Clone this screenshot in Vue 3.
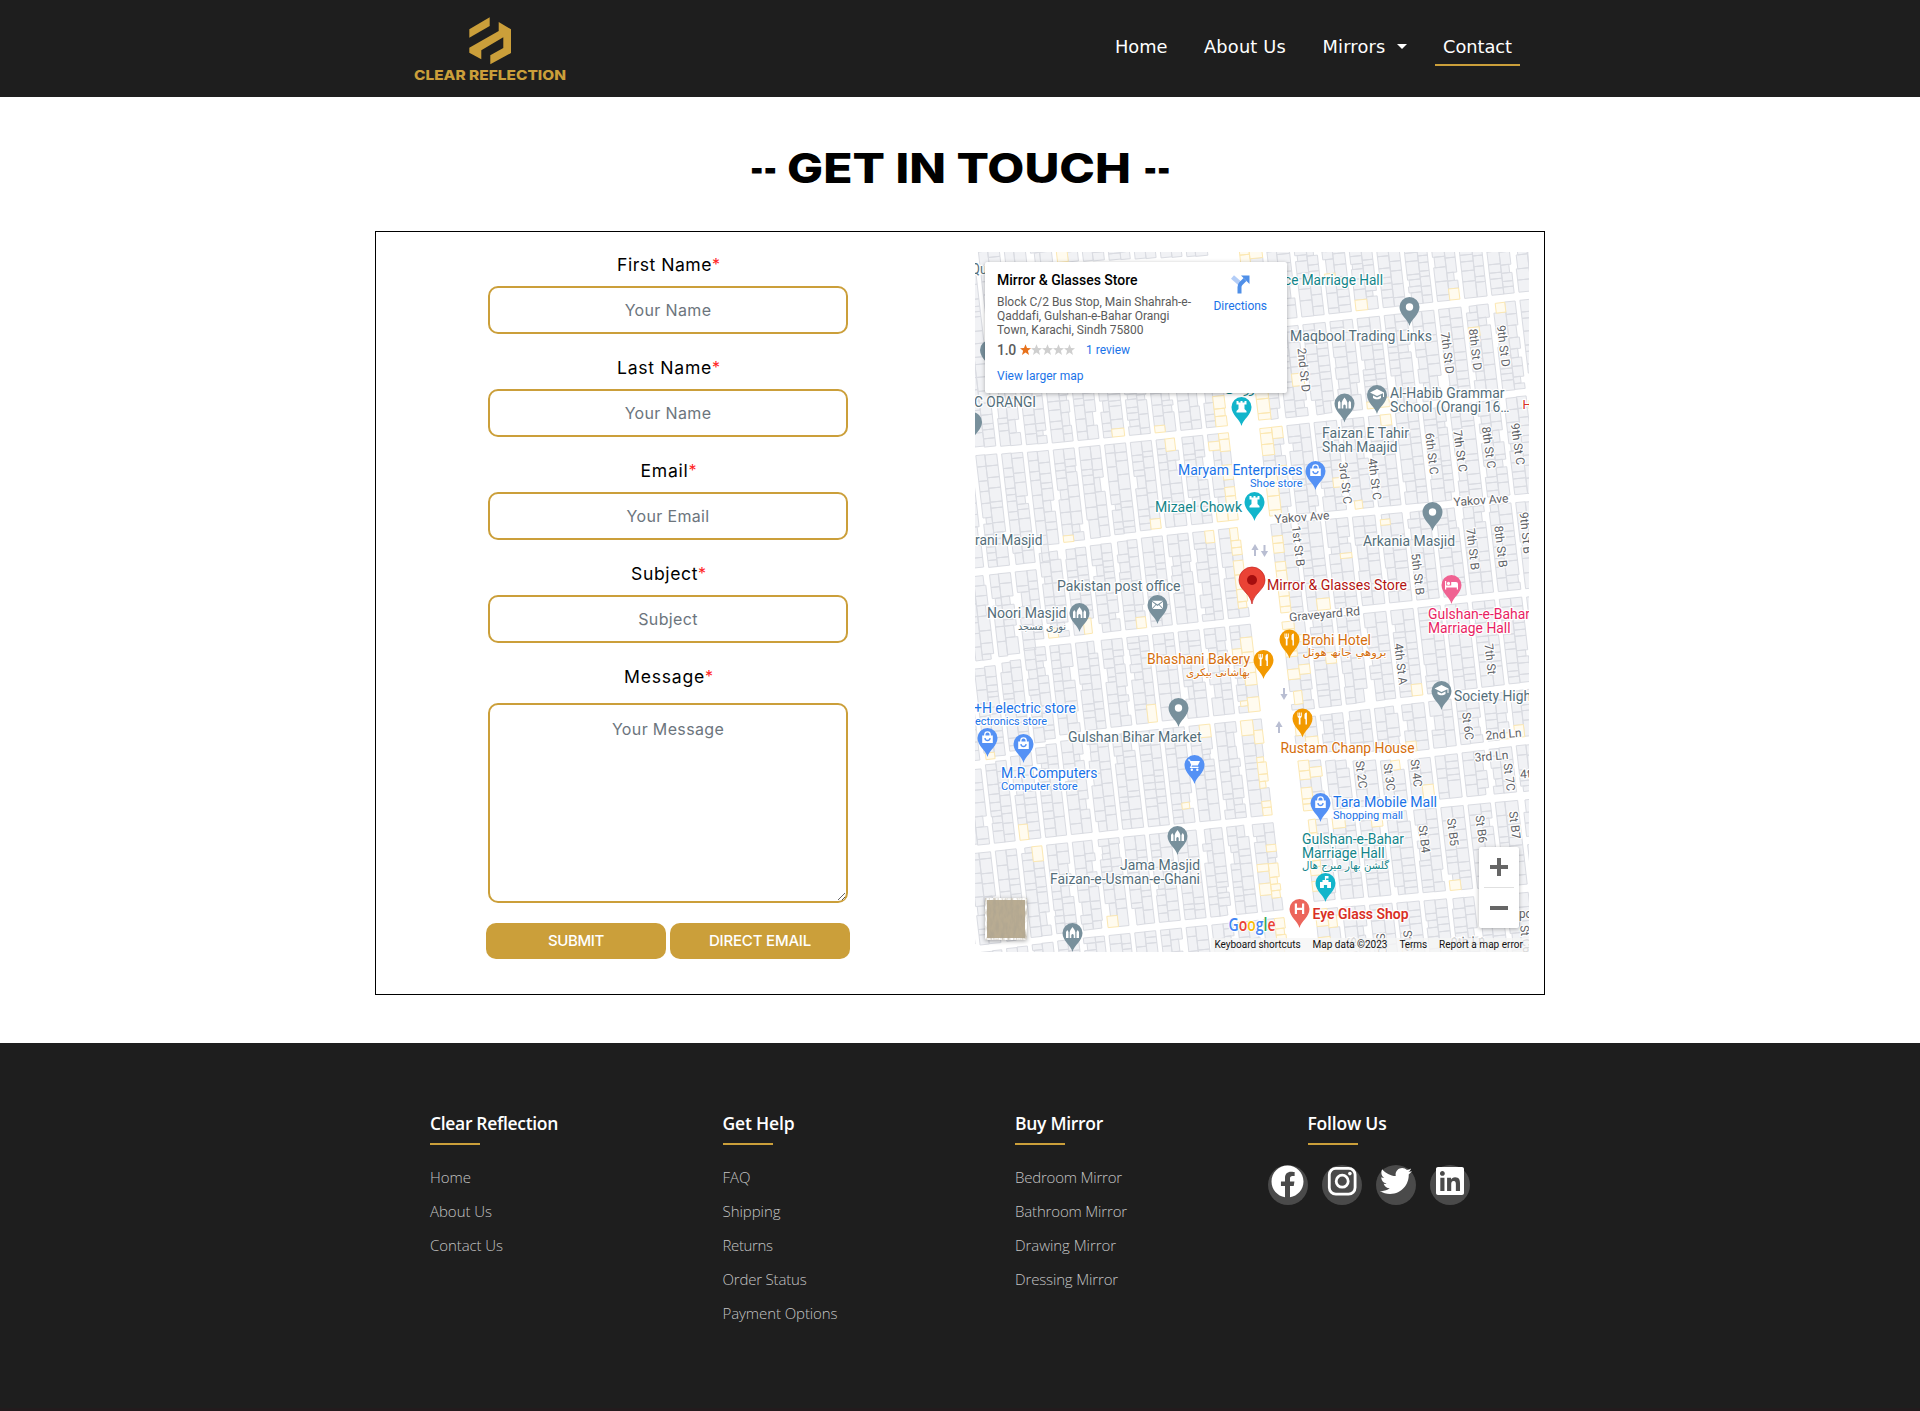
<script setup>
// Stretches or tightens tracking so that a label takes a given width.
const vFit = {
  mounted(el, { value }) {
    const natural = el.getBoundingClientRect().width
    el.style.letterSpacing = (value - natural) / el.textContent.length + 'px'
  },
}

const nav = [
  { text: 'Home', w: 52.5 },
  { text: 'About Us', w: 82 },
  { text: 'Mirrors', w: 63, caret: true },
  { text: 'Contact', w: 69, active: true },
]

const fields = [
  { label: 'First Name', w: 95, hint: 'Your Name' },
  { label: 'Last Name', w: 95, hint: 'Your Name' },
  { label: 'Email', w: 48, hint: 'Your Email' },
  { label: 'Subject', w: 67, hint: 'Subject' },
]

const columns = [
  { title: 'Clear Reflection', w: 128, links: [['Home', 41], ['About Us', 62], ['Contact Us', 73]] },
  { title: 'Get Help', w: 72, links: [['FAQ', 28], ['Shipping', 58], ['Returns', 50], ['Order Status', 84], ['Payment Options', 115]] },
  { title: 'Buy Mirror', w: 88, links: [['Bedroom Mirror', 107], ['Bathroom Mirror', 112], ['Drawing Mirror', 101], ['Dressing Mirror', 103]] },
]

// ---- street grid ----
let seed = 7
const rnd = () => {
  seed = (seed * 16807) % 2147483647
  return seed / 2147483647
}
const along = (pts, x) => {
  if (x <= pts[0][0]) return pts[0][1]
  for (let i = 1; i < pts.length; i++) {
    const [x0, y0] = pts[i - 1]
    const [x1, y1] = pts[i]
    if (x <= x1) return y0 + ((y1 - y0) * (x - x0)) / (x1 - x0)
  }
  return pts[pts.length - 1][1]
}
const leftRoads = [
  [[0, -30], [300, -30]],
  [[0, 18], [300, 5]],
  [[0, 199], [62, 195], [175, 184], [255, 176]],
  [[0, 320], [62, 313], [65, 297], [172, 281], [272, 270]],
  [[0, 413], [48, 402], [52, 392], [272, 368]],
  [[0, 513], [85, 485], [182, 473], [290, 462]],
  [[0, 597], [95, 586], [195, 576], [300, 566]],
  [[0, 697], [95, 683], [310, 661]],
  [[0, 740], [310, 730]],
]
const rightRoads = [
  [[280, -30], [560, -30]],
  [[280, 73], [312, 70], [552, 43]],
  [[285, 172], [395, 160], [552, 139]],
  [[295, 268], [552, 245]],
  [[312, 365], [552, 340]],
  [[320, 462], [552, 433]],
  [[430, 504], [552, 488]],
  [[340, 563], [552, 543]],
  [[302, 656], [552, 636]],
  [[302, 730], [552, 720]],
]
const slope = 0.115
let grey = ''
let yellow = ''
const f = (n) => n.toFixed(1)
function fill(roads, edge, dir, pitch, count) {
  for (let k = 0; k < count; k++) {
    for (let r = 0; r < roads.length - 1; r++) {
      const off = dir * k * pitch
      const inner = pitch - 5
      const split = inner * (0.42 + rnd() * 0.16)
      for (let half = 0; half < 2; half++) {
        const a = half ? split : 0
        const b = half ? inner : split
        const base = dir > 0 ? edge + off : edge + off - inner
        const at = (o, y) => base + o + slope * (y - 170)
        const mid = at((a + b) / 2, along(roads[r], base + 20))
        let y = along(roads[r], mid) + 4.5
        const end = along(roads[r + 1], mid) - 4.5
        while (y < end - 3) {
          let h = 5 + rnd() * 10
          if (end - y - h < 5) h = end - y
          const cut = rnd() < 0.14 ? 1 + rnd() * 3 : 0
          const l = half ? 0 : cut
          const g = half ? cut : 0
          const tl = at(a + l, y)
          const tr = at(b - g, y)
          const bl = at(a + l, y + h)
          const br = at(b - g, y + h)
          const sk = (b - a) * 0.05
          const p = `M${f(tl)} ${f(y + sk)}L${f(tr)} ${f(y - sk)}L${f(br)} ${f(y + h - sk)}L${f(bl)} ${f(y + h + sk)}z`
          const nearMain = k === 0
          const nearRoad = y < along(roads[r], mid) + 9 || y + h > end - 2
          const outer = dir > 0 ? !half : half
          const chance = nearMain ? (outer ? 0.75 : 0.12) : nearRoad ? 0.07 : 0.004
          if (rnd() < chance) yellow += p
          else grey += p
          y += h
        }
      }
    }
  }
}
fill(leftRoads, 252, -1, 26, 14)
fill(rightRoads, 284, 1, 27.5, 13)

// ---- places: [text, x, baseline, width, colour, size] ----
const SLATE = '#546e7a'
const BLUE = '#1a73e8'
const TEAL = '#12858a'
const ORANGE = '#d56e0c'
const labels = [
  ['Qu', -4, 22, 16, SLATE, 14],
  ['ce Marriage Hall', 309, 33, 99, TEAL, 14],
  ['Maqbool Trading Links', 315, 89, 142, SLATE, 14],
  ['Al-Habib Grammar', 415, 146, 114.5, SLATE, 14],
  ['School (Orangi 16…', 415, 160, 119.5, SLATE, 14],
  ['Faizan E Tahir', 347, 186, 87, SLATE, 14],
  ['Shah Maajid', 347, 200, 75.5, SLATE, 14],
  ['H', 547.5, 157, 9, '#d93025', 12],
  ['C ORANGI', -1, 155, 62, SLATE, 14],
  ['Maryam Enterprises', 203, 223, 124.5, BLUE, 14],
  ['Shoe store', 275, 235, 52.5, BLUE, 11],
  ['Mizael Chowk', 180, 260, 87, TEAL, 14],
  ['rani Masjid', 0, 293, 67.5, SLATE, 14],
  ['Pakistan post office', 82, 339, 123.5, SLATE, 14],
  ['Noori Masjid', 12, 366, 79.5, SLATE, 14],
  ['Arkania Masjid', 388, 294, 92, SLATE, 14],
  ['Gulshan-e-Bahar', 453, 367, 102, '#e91e63', 14],
  ['Marriage Hall', 453, 381, 82.5, '#e91e63', 14],
  ['Mirror & Glasses Store', 292, 338, 140, '#b31412', 14],
  ['Brohi Hotel', 327, 393, 69, ORANGE, 14],
  ['Bhashani Bakery', 172, 412, 103, ORANGE, 14],
  ['Society High', 479, 449, 77, SLATE, 14],
  ['+H electric store', -1, 461, 102, BLUE, 14],
  ['ectronics store', 0, 473, 72, BLUE, 11],
  ['Gulshan Bihar Market', 93, 490, 133.5, SLATE, 14],
  ['M.R Computers', 26, 526, 96.5, BLUE, 14],
  ['Computer store', 26, 538, 76.5, BLUE, 11],
  ['Rustam Chanp House', 305.5, 501, 134, ORANGE, 14],
  ['Tara Mobile Mall', 358, 555, 104, BLUE, 14],
  ['Shopping mall', 358, 567, 70, BLUE, 11],
  ['Gulshan-e-Bahar', 327, 592, 102, TEAL, 14],
  ['Marriage Hall', 327, 606, 82.5, TEAL, 14],
  ['Jama Masjid', 145, 618, 80, SLATE, 14],
  ['Faizan-e-Usman-e-Ghani', 75, 632, 150, SLATE, 14],
]
const urdu = [
  ['اورنگی', 283, 141, 33, TEAL],
  ['نوری مسجد', 91, 378, 48, SLATE],
  ['بروهي جانھ هوٽل', 411.5, 404, 84, ORANGE],
  ['بهاشانی بیکری', 275, 424, 64, ORANGE],
  ['گلشن بهار میرج هال', 414, 617, 87, TEAL],
]
// [text, centre x, centre y, length, angle]
const streets = [
  ['2nd St D', 329, 118, 44, 84], ['7th St D', 472.7, 101, 42, 83], ['8th St D', 500.5, 97.5, 42, 83], ['9th St D', 528.7, 94, 42, 83],
  ['3rd St C', 370.5, 231, 42, 83], ['4th St C', 400, 227, 42, 83], ['6th St C', 457, 201.5, 42, 83], ['7th St C', 485.5, 199, 42, 82],
  ['8th St C', 514, 195.5, 42, 82], ['9th St C', 543, 192, 42, 82],
  ['Yakov Ave', 327, 265, 55, -4], ['Yakov Ave', 506, 248, 55, -4], ['Graveyard Rd', 349.5, 362, 71, -5],
  ['1st St B', 323.5, 294, 41, 83], ['5th St B', 443, 322, 42, 83], ['7th St B', 498, 297, 42, 83], ['8th St B', 526, 294.5, 42, 83],
  ['9th St B', 551, 281, 42, 84], ['4th St A', 426, 412, 42, 83], ['7th St', 515.5, 407, 31, 84],
  ['St 6C', 493, 474, 28, 83], ['2nd Ln', 528.5, 482, 36, -5], ['3rd Ln', 516.5, 504, 34, -5], ['4th Ln', 562, 521, 34, -4],
  ['St 2C', 386.5, 522.5, 28, 83], ['St 3C', 414.5, 525, 28, 83], ['St 4C', 441.5, 521, 28, 83], ['St 7C', 534.5, 525, 28, 83],
  ['St B4', 449.5, 587, 28, 83], ['St B5', 478, 580, 28, 83], ['St B6', 506.5, 577, 28, 83], ['St B7', 540, 573, 28, 83],
  ['St B3', 378, 699, 28, 83], ['St C4', 407, 695, 28, 83], ['St C5', 434, 692, 28, 83], ['St C6', 551, 687, 28, 83],
  ['9th Ln', 493, 689, 34, -4], ['poor', 556, 662, 24, 0],
]
const GREYPIN = '#78909c'
const BLUEPIN = '#5491f5'
const AMBER = '#f29900'
const CYAN = '#12b5cb'
// [x, tip y, colour, glyph]
const pins = [
  [434.5, 74, GREYPIN, 'dot'], [402, 162, GREYPIN, 'cap'], [369.5, 170.5, GREYPIN, 'mosque'], [15, 117, GREYPIN, 'dot'], [-3, 189, GREYPIN, 'none'],
  [266.5, 174, CYAN, 'rook'], [340.5, 238, BLUEPIN, 'bag'], [279.5, 269, CYAN, 'rook'], [457.5, 279, GREYPIN, 'dot'],
  [182.5, 372, GREYPIN, 'mail'], [104.5, 380, GREYPIN, 'mosque'], [476.5, 352, '#f06292', 'bed'], [314.5, 406.5, AMBER, 'fork'],
  [288.5, 427, AMBER, 'fork'], [466.5, 458, GREYPIN, 'cap'], [203.5, 475, GREYPIN, 'dot'], [12.5, 505, BLUEPIN, 'bag'], [48.5, 511, BLUEPIN, 'bag'],
  [219.5, 532, BLUEPIN, 'cart'], [327.5, 485.5, AMBER, 'fork'], [345.5, 570, BLUEPIN, 'bag'], [202.5, 603, GREYPIN, 'mosque'],
  [350.5, 650, CYAN, 'hall'], [324.5, 676, '#ec665c', 'h'], [97.5, 700, GREYPIN, 'mosque'],
]
const glyphs = {
  cap: 'M-7-21.5L0-25L7-21.5V-17H6V-20.8L0-18zM-4-18.4L0-16.4L4-18.4V-16C2-14.2-2-14.2-4-16z',
  mosque: 'M-6.5-14V-20L-5.2-22L-4-20V-14zM-2.8-14V-20Q-2.5-22 0-25Q2.5-22 2.8-20V-14H1.2V-17Q0-19-1.2-17V-14zM4-14V-20L5.2-22L6.5-20V-14z',
  rook: 'M-5-25H-3V-23.5H-1V-25H1V-23.5H3V-25H5V-21.5H3V-17L5-15V-13.5H-5V-15L-3-17V-21.500H-5z',
  hall: 'M-.6-26H3V-23.5H.6V-22H3V-20H5.5V-14H1.6V-17H-1.6V-14H-5.5V-20H-3V-22H-.6z',
  mail: 'M-5.5-23.3H5.5L0-19.6zM-5.5-22.3L-2-19.5L-5.5-15.8zM5.5-22.3L2-19.5L5.5-15.8zM-5-15L-1.4-19L0-18L1.4-19L5-15z',
  bed: 'M-6.5-23H-5.3V-18.5H-.3V-22H4.5Q6.5-22 6.5-20V-14.5H5.3V-16.5H-5.3V-14.5H-6.5zM-4.6-20.6a1.6 1.6 0 1 0 3.2 0a1.6 1.6 0 1 0-3.2 0',
  fork: 'M-5-25H-4V-21.5H-3.3V-25H-2.4V-21.5H-1.7V-25H-.7V-21.5Q-.7-20-2-19.5V-13H-3.7V-19.5Q-5-20-5-21.5zM2-19V-23Q2.3-25 4.4-25V-13H3V-18z',
  cart: 'M-6.5-24.5H-4.5L-4-23H5.5L3.3-18.5H-2.4L-3-17.2H4V-16H-4.8L-3.3-19L-5.3-23.4H-6.5zM-3.9-14.2a1.2 1.2 0 1 0 2.4 0a1.2 1.2 0 1 0-2.4 0M1.6-14.2a1.2 1.2 0 1 0 2.4 0a1.2 1.2 0 1 0-2.4 0',
}
const arrows = [[280, 298, 180], [289.5, 299, 0], [309, 442, 0], [304, 475, 180]]
const google = [['G', '#4285f4'], ['o', '#ea4335'], ['o', '#fbbc05'], ['g', '#4285f4'], ['l', '#34a853'], ['e', '#ea4335']]
</script>

<template>
  <div class="page">
    <header class="top">
      <div class="top-inner">
        <svg class="logo" width="154" height="66" viewBox="0 0 154 66">
          <g fill="#cb9f3a">
            <path d="M55.3 13.3L75.7 1.3V10L55.3 21.7z" />
            <path d="M84.7 6L97 13.3V37L76.3 48.3V39.3L89.3 32V21.3L67.3 34.3V43.3L55.3 36.7V31.7L84.7 15z" />
            <text x="0" y="63.8" font-size="13.5" font-weight="800" textLength="152" lengthAdjust="spacingAndGlyphs">CLEAR REFLECTION</text>
          </g>
        </svg>
        <nav>
          <a v-for="n in nav" :key="n.text" :class="{ active: n.active }">
            <span v-fit="n.w" class="fit">{{ n.text }}</span><i v-if="n.caret" class="caret"></i>
          </a>
        </nav>
      </div>
    </header>

    <main>
      <h1>
        <svg width="440" height="60" viewBox="0 0 440 60">
          <text x="0" y="38" textLength="27" lengthAdjust="spacingAndGlyphs">--</text>
          <text x="37" y="38" textLength="344" lengthAdjust="spacingAndGlyphs">GET IN TOUCH</text>
          <text x="393.500" y="38" textLength="27" lengthAdjust="spacingAndGlyphs">--</text>
        </svg>
      </h1>

      <section class="panel">
        <form class="form" @submit.prevent>
          <div v-for="fd in fields" :key="fd.label" class="field">
            <label><span v-fit="fd.w" class="fit">{{ fd.label }}</span><b>*</b></label>
            <input type="text" :placeholder="fd.hint" />
          </div>
          <div class="field message">
            <label><span v-fit="81" class="fit">Message</span><b>*</b></label>
            <textarea placeholder="Your Message"></textarea>
          </div>
          <div class="buttons">
            <button><span v-fit="56" class="fit">SUBMIT</span></button>
            <button><span v-fit="102" class="fit">DIRECT EMAIL</span></button>
          </div>
        </form>

        <div class="map">
          <svg class="tiles" width="554" height="700" viewBox="0 0 554 700">
            <path :d="grey" fill="#f1f2f5" stroke="#dadce2" stroke-width="1" />
            <path :d="yellow" fill="#fffbef" stroke="#fce8b2" stroke-width="1" />
            <g v-for="(a, i) in arrows" :key="'a' + i" :transform="`translate(${a[0]} ${a[1]}) rotate(${a[2]})`">
              <path d="M-1-6H1V0H3.6L0 6L-3.6 0H-1z" fill="#b9bed2" />
            </g>
            <text
              v-for="(s, i) in streets" :key="'s' + i" class="halo" fill="#5f6368" font-size="12" text-anchor="middle"
              :textLength="s[3]" lengthAdjust="spacingAndGlyphs" :transform="`translate(${s[1]} ${s[2]}) rotate(${s[4]})`" y="4.3"
            >{{ s[0] }}</text>
            <g v-for="(p, i) in pins" :key="'p' + i" :transform="`translate(${p[0]} ${p[1]})`">
              <path d="M0 0C-1.6-7-10-11-10-19a10 10 0 0 1 20 0C10-11 1.6-7 0 0z" :fill="p[2]" />
              <circle v-if="p[3] === 'dot'" cy="-19" r="3.7" fill="#fff" />
              <g v-else-if="p[3] === 'bag'">
                <path d="M-5.3-21.5H5.3V-14H-5.3z" fill="#fff" />
                <path d="M-2.7-21V-22.5a2.7 2.7 0 0 1 5.4 0V-21" fill="none" stroke="#fff" stroke-width="1.3" />
                <path d="M-2.5-19a2.5 2.5 0 0 0 5 0" fill="none" :stroke="p[2]" stroke-width="1.3" />
              </g>
              <path v-else-if="p[3] === 'h'" d="M-3.6-24.5V-14M3.6-24.5V-14M-3.6-19.2H3.6" stroke="#fff" stroke-width="2.2" />
              <path v-else-if="glyphs[p[3]]" :d="glyphs[p[3]]" fill="#fff" />
            </g>
            <path d="M277 352C275.5 341 264 338 264 328a13 13 0 0 1 26 0C290 338 278.5 341 277 352z" fill="#ea4335" stroke="#c5221f" stroke-width=".7" />
            <circle cx="277" cy="328" r="5" fill="#a50e0e" />
            <text
              v-for="(l, i) in labels" :key="'l' + i" class="halo" :x="l[1]" :y="l[2]" :fill="l[4]" :font-size="l[5]" :textLength="l[3]"
              lengthAdjust="spacingAndGlyphs"
            >{{ l[0] }}</text>
            <text class="halo" x="337.5" y="667" fill="#d93025" font-size="14" font-weight="600" textLength="96" lengthAdjust="spacingAndGlyphs">Eye Glass Shop</text>
            <text
              v-for="(u, i) in urdu" :key="'u' + i" class="halo urdu" :x="u[1]" :y="u[2]" :fill="u[4]" direction="rtl" :textLength="u[3]"
              lengthAdjust="spacingAndGlyphs"
            >{{ u[0] }}</text>
            <text class="google" x="253.5" y="679" textLength="47" lengthAdjust="spacingAndGlyphs"><tspan v-for="(g, i) in google" :key="i" :fill="g[1]">{{ g[0] }}</tspan></text>
          </svg>

          <aside class="card">
            <div class="place">
              <strong><span v-fit="140.5" class="fit">Mirror &amp; Glasses Store</span></strong>
              <p>
                <span v-fit="194" class="fit">Block C/2 Bus Stop, Main Shahrah-e-</span>
                <span v-fit="172" class="fit">Qaddafi, Gulshan-e-Bahar Orangi</span>
                <span v-fit="146.5" class="fit">Town, Karachi, Sindh 75800</span>
              </p>
              <div class="rating">
                <em><span v-fit="19" class="fit">1.0</span></em>
                <svg width="56" height="12" viewBox="0 0 56 12">
                  <path
                    v-for="n in 5" :key="n" :transform="`translate(${(n - 1) * 11} 0)`" :fill="n === 1 ? '#e7711b' : '#cfcfcf'"
                    d="M5.5.2L7 4L11 4.200L7.900 6.800L9 10.900L5.500 8.600L2 10.900L3.100 6.800L0 4.200L4 4z"
                  />
                </svg>
                <a><span v-fit="44" class="fit">1 review</span></a>
              </div>
              <a class="larger"><span v-fit="86.5" class="fit">View larger map</span></a>
            </div>
            <div class="directions">
              <svg width="19" height="19" viewBox="0 0 19 19">
                <path d="M1.5 2L9.5 9" stroke="#b3cdf7" stroke-width="4.5" />
                <path d="M8.5 18.5V12Q8.500 10 10 8.500L14 4.500" fill="none" stroke="#4f8fe8" stroke-width="4" />
                <path d="M10 .5H18.500V9z" fill="#4f8fe8" />
              </svg>
              <a><span v-fit="53.5" class="fit">Directions</span></a>
            </div>
          </aside>

          <svg class="thumb" width="42" height="42" viewBox="0 0 42 42">
            <filter id="grain"><feTurbulence type="fractalNoise" baseFrequency=".35 .12" numOctaves="3" seed="4" /><feColorMatrix values="0 0 0 0 .42  0 0 0 0 .37  0 0 0 0 .28  1.4 0 0 0 -.45" /></filter>
            <rect width="42" height="42" rx="2" fill="#fff" />
            <rect x="2" y="2" width="38" height="38" fill="#b9ac92" />
            <rect x="2" y="2" width="38" height="38" filter="url(#grain)" />
          </svg>

          <div class="zoom"><i class="plus"></i><hr /><i></i></div>

          <div class="credits">
            <span v-fit="86" class="fit">Keyboard shortcuts</span>
            <span v-fit="75" class="fit">Map data ©2023</span>
            <span v-fit="27.5" class="fit">Terms</span>
            <span v-fit="84" class="fit">Report a map error</span>
          </div>
        </div>
      </section>
    </main>

    <footer>
      <div class="cols">
        <div v-for="c in columns" :key="c.title" class="col">
          <h4><span v-fit="c.w" class="fit">{{ c.title }}</span></h4>
          <ul>
            <li v-for="l in c.links" :key="l[0]"><span v-fit="l[1]" class="fit">{{ l[0] }}</span></li>
          </ul>
        </div>
        <div class="col">
          <h4><span v-fit="79" class="fit">Follow Us</span></h4>
          <div class="social">
            <a>
              <svg width="33" height="33" viewBox="0 0 512 512"><path fill="#fff" d="M504 256C504 119 393 8 256 8S8 119 8 256c0 123.78 90.69 226.38 209.25 245V327.69h-63V256h63v-54.64c0-62.15 37-96.48 93.67-96.48 27.14 0 55.52 4.84 55.52 4.84v61h-31.28c-30.8 0-40.41 19.12-40.41 38.73V256h68.78l-11 71.69h-57.78V501C413.31 482.38 504 379.78 504 256z" /></svg>
            </a>
            <a>
              <svg width="32" height="32" viewBox="0 0 32 32"><rect x="3.3" y="3.3" width="25.8" height="25.8" rx="6.5" fill="none" stroke="#fff" stroke-width="2.8" /><circle cx="16.2" cy="16.2" r="6" fill="none" stroke="#fff" stroke-width="2.8" /><circle cx="23.9" cy="8.6" r="1.8" fill="#fff" /></svg>
            </a>
            <a>
              <svg width="32" height="32" viewBox="0 0 512 512"><path fill="#fff" d="M459.37 151.716c.325 4.548.325 9.097.325 13.645 0 138.72-105.583 298.558-298.558 298.558-59.452 0-114.68-17.219-161.137-47.106 8.447.974 16.568 1.299 25.34 1.299 49.055 0 94.213-16.568 130.274-44.832-46.132-.975-84.792-31.188-98.112-72.772 6.498.974 12.995 1.624 19.818 1.624 9.421 0 18.843-1.3 27.614-3.573-48.081-9.747-84.143-51.98-84.143-102.985v-1.299c13.969 7.797 30.214 12.67 47.431 13.319-28.264-18.843-46.781-51.005-46.781-87.391 0-19.492 5.197-37.36 14.294-52.954 51.655 63.675 129.3 105.258 216.365 109.807-1.624-7.797-2.599-15.918-2.599-24.04 0-57.828 46.782-104.934 104.934-104.934 30.213 0 57.502 12.67 76.67 33.137 23.715-4.548 46.456-13.32 66.599-25.34-7.798 24.366-24.366 44.833-46.132 57.827 21.117-2.273 41.584-8.122 60.426-16.243-14.292 20.791-32.161 39.308-52.628 54.253z" /></svg>
            </a>
            <a>
              <svg width="28" height="32" viewBox="0 0 448 512"><path fill="#fff" d="M416 32H31.9C14.3 32 0 46.5 0 64.3v383.4C0 465.5 14.3 480 31.9 480H416c17.6 0 32-14.5 32-32.3V64.3c0-17.8-14.4-32.3-32-32.3zM135.4 416H69V202.2h66.5V416zm-33.2-243c-21.3 0-38.5-17.3-38.5-38.5S80.9 96 102.2 96c21.2 0 38.5 17.3 38.5 38.5 0 21.3-17.2 38.5-38.5 38.5zm282.1 243h-66.4V312c0-24.8-.5-56.7-34.5-56.7-34.6 0-39.9 27-39.9 54.9V416h-66.4V202.2h63.7v29.2h.9c8.9-16.8 30.6-34.5 62.9-34.5 67.2 0 79.7 44.3 79.7 101.9V416z" /></svg>
            </a>
          </div>
        </div>
      </div>
    </footer>
  </div>
</template>

<style>
body { background: #fff; }
</style>

<style scoped>
* { box-sizing: border-box; }
.page { width: 1920px; height: 1411px; overflow: hidden; display: flex; flex-direction: column; font-family: Inter, sans-serif; color: #000; }
.fit { display: inline-block; white-space: nowrap; }

.top { height: 97px; background: #1e1e1e; flex: none; }
.top-inner { width: 1106px; margin-left: 414px; display: flex; justify-content: space-between; align-items: flex-start; }
.logo { margin-top: 16px; font-family: Inter, sans-serif; }
nav { display: flex; gap: 20.5px; margin-top: 30px; font: 17.8px/34px "DejaVu Sans", sans-serif; color: #fff; }
nav a { display: flex; align-items: center; padding: 0 8px; height: 36px; border-bottom: 2px solid transparent; }
nav a.active { border-color: #cb9f3a; }
.caret { margin: 0 0 1px 11px; border: 5px solid transparent; border-top-color: #fff; border-bottom: 0; }

main { flex: none; height: 946px; }
h1 { margin: 48px 0 0 750px; height: 86px; font-size: 41px; font-weight: 800; font-family: Inter, sans-serif; }
h1 svg { display: block; }
.panel { width: 1170px; height: 764px; margin-left: 375px; border: 1px solid #000; display: flex; justify-content: space-between; padding: 20px 15px 0 110px; }
.form { width: 364px; display: flex; flex-direction: column; }
.field { display: flex; flex-direction: column; align-items: center; margin-bottom: 21px; }
label { height: 26px; line-height: 25px; margin-bottom: 8px; font-size: 17.6px; display: flex; }
label b { font-weight: 400; color: #f22; width: 7px; font-size: 16px; }
input, textarea { width: 360px; height: 48px; border: 2px solid #cb9f3a; border-radius: 10px; text-align: center; font: 16px/24px Inter, sans-serif; letter-spacing: .35px; padding: 0; outline: 0; background: #fff; }
input::placeholder, textarea::placeholder { color: #6c757d; opacity: 1; }
.message { margin-bottom: 20px; }
.message label { margin-bottom: 13px; }
textarea { display: block; height: 200px; padding: 12px 10px; resize: both; }
.buttons { display: flex; gap: 4px; }
button { width: 180px; height: 36px; border: 0; border-radius: 10px; background: #cb9f3a; color: #fff; font: 500 15px/36px Inter, sans-serif; padding: 0; }

.map { position: relative; width: 554px; height: 700px; overflow: hidden; font-family: Roboto, sans-serif; background: #fff; }
.tiles { display: block; }
.halo { paint-order: stroke; stroke: #fff; stroke-width: 2.5px; stroke-linejoin: round; font-family: Roboto, sans-serif; }
.urdu { font-family: "DejaVu Sans", sans-serif; font-size: 10.5px; stroke-width: 2px; }
.google { font: 600 17.5px "Open Sans", sans-serif; paint-order: stroke; stroke: #fff; stroke-width: 2px; }
.card { position: absolute; left: 10px; top: 10px; width: 302px; height: 131px; background: #fff; border-radius: 2px; box-shadow: 0 1px 4px rgba(0, 0, 0, .3); padding: 8px 20px 0 12px; display: flex; justify-content: space-between; font-size: 12px; color: #5b5b5b; }
.card a { color: #1a73e8; }
.place { display: flex; flex-direction: column; align-items: flex-start; }
.place strong { font-size: 14px; font-weight: 500; line-height: 20px; color: #000; }
.place p { margin: 5px 0 0; display: flex; flex-direction: column; align-items: flex-start; line-height: 14px; }
.rating { display: flex; align-items: center; height: 18px; margin-top: 4px; }
.rating em { font-style: normal; font-size: 14px; font-weight: 500; width: 23px; }
.rating svg { margin-right: 10px; }
.larger { margin-top: 9px; line-height: 16px; }
.directions { display: flex; flex-direction: column; align-items: center; padding-top: 5px; }
.directions a { margin-top: 4px; line-height: 16px; }
.thumb { position: absolute; left: 10px; top: 646px; filter: drop-shadow(0 1px 2px rgba(0, 0, 0, .35)); }
.zoom { position: absolute; left: 504px; top: 595px; width: 40px; height: 81px; background: #fff; border-radius: 2px; box-shadow: 0 1px 4px rgba(0, 0, 0, .3); display: flex; flex-direction: column; align-items: center; justify-content: space-between; padding: 18px 0; }
.zoom i { width: 18px; height: 4px; background: #666; }
.zoom .plus { background: linear-gradient(#666, #666) center / 4px 18px no-repeat, linear-gradient(#666, #666) center / 18px 4px no-repeat; height: 18px; margin-top: -7px; }
.zoom hr { width: 30px; height: 1px; border: 0; margin: 0; background: #e0e0e0; transform: translateY(-4px); }
.credits { position: absolute; right: 0; bottom: 0; height: 14px; padding: 0 6px 0 4px; background: rgba(245, 245, 245, .8); display: flex; gap: 12px; font-size: 10px; line-height: 14px; color: #111; }

footer { flex: 1; background: #1e1e1e; border-bottom: 3px solid #231b1d; font-family: "Open Sans", sans-serif; }
.cols { display: flex; margin: 67px 0 0 430px; }
.col { width: 292.5px; }
h4 { position: relative; margin: 0; height: 35px; font-size: 17.5px; font-weight: 600; line-height: 26px; color: #fff; }
h4::after { content: ""; position: absolute; left: 0; bottom: 0; width: 50px; height: 2px; background: #cb9f3a; }
ul { list-style: none; margin: 15px 0 0; padding: 0; }
li { height: 34px; line-height: 35px; font-size: 15px; font-weight: 300; color: #c4c4c4; }
.social { display: flex; gap: 14.3px; margin: 20px 0 0 -40px; }
.social a { width: 40px; height: 40px; border-radius: 50%; background: #4a4a4a; display: flex; justify-content: center; align-items: flex-start; }
.social a svg { flex: none; }
</style>
